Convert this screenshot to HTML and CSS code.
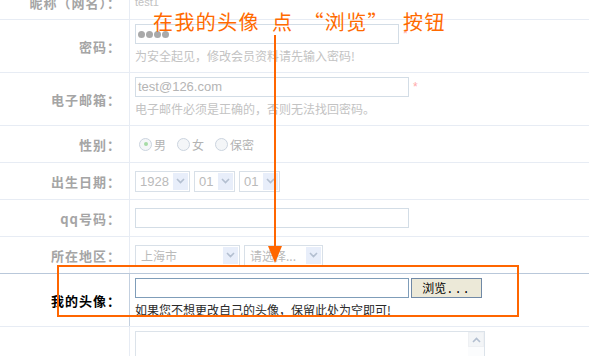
FILE: index.html
```html
<!DOCTYPE html>
<html lang="zh-CN">
<head>
  <meta charset="UTF-8" />
  <title>修改会员资料</title>
  <link rel="stylesheet" href="styles.css">
</head>
<body>
  <div class="page">
    <div class="form">
      <div class="row row-top">
        <div class="label">昵称（网名）：</div>
        <div class="field"><span class="plain">test1</span></div>
      </div>

      <div class="row row-tall">
        <div class="label">密码：</div>
        <div class="field">
          <div class="line">
            <div class="box box-pwd"><span class="dot"></span><span class="dot"></span><span class="dot"></span><span class="dot"></span></div>
            <span class="star">*</span>
          </div>
          <div class="hint">为安全起见，修改会员资料请先输入密码!</div>
        </div>
      </div>

      <div class="row row-tall">
        <div class="label">电子邮箱：</div>
        <div class="field">
          <div class="line">
            <div class="box box-wide">test@126.com</div>
            <span class="star">*</span>
          </div>
          <div class="hint">电子邮件必须是正确的，否则无法找回密码。</div>
        </div>
      </div>

      <div class="row">
        <div class="label">性别：</div>
        <div class="field">
          <label class="opt"><span class="radio on"></span>男</label>
          <label class="opt"><span class="radio"></span>女</label>
          <label class="opt"><span class="radio"></span>保密</label>
        </div>
      </div>

      <div class="row">
        <div class="label">出生日期：</div>
        <div class="field">
          <div class="sel sel-year">1928<span class="arr"><svg width="9" height="6" viewBox="0 0 9 6"><polyline points="1,1 4.5,4.5 8,1" /></svg></span></div>
          <div class="sel sel-day">01<span class="arr"><svg width="9" height="6" viewBox="0 0 9 6"><polyline points="1,1 4.5,4.5 8,1" /></svg></span></div>
          <div class="sel sel-day">01<span class="arr"><svg width="9" height="6" viewBox="0 0 9 6"><polyline points="1,1 4.5,4.5 8,1" /></svg></span></div>
        </div>
      </div>

      <div class="row">
        <div class="label">qq号码：</div>
        <div class="field">
          <div class="box box-wide"></div>
        </div>
      </div>

      <div class="row row-before-focus">
        <div class="label">所在地区：</div>
        <div class="field">
          <div class="sel sel-city cjk">上海市<span class="arr"><svg width="9" height="6" viewBox="0 0 9 6"><polyline points="1,1 4.5,4.5 8,1" /></svg></span></div>
          <div class="sel sel-area cjk">请选择...<span class="arr"><svg width="9" height="6" viewBox="0 0 9 6"><polyline points="1,1 4.5,4.5 8,1" /></svg></span></div>
        </div>
      </div>

      <div class="row row-tall row-focus">
        <div class="label">我的头像：</div>
        <div class="field">
          <div class="line">
            <div class="box file-box"></div>
            <button class="browse">浏览<span class="dots">...</span></button>
          </div>
          <div class="hint">如果您不想更改自己的头像，保留此处为空即可!</div>
        </div>
      </div>

      <div class="row row-last">
        <div class="label"></div>
        <div class="field">
          <div class="area">
            <div class="scroll"><span class="up"><svg width="9" height="6" viewBox="0 0 9 6"><polyline points="1,5 4.5,1.5 8,5" /></svg></span></div>
          </div>
        </div>
      </div>
    </div>

    <!-- 标注 -->
    <div class="note">
      <span class="seg">在我的头像</span><span class="seg seg-dian">点</span><span class="seg seg-q">“浏览”</span><span class="seg seg-btn">按钮</span>
    </div>
    <svg class="arrow" width="20" height="240" viewBox="0 0 20 240">
      <line x1="10" y1="0" x2="10" y2="214" />
      <polygon points="3,211 17,211 10,228" />
    </svg>
    <div class="mark"></div>
  </div>
</body>
</html>
```

FILE: styles.css
```css
body {
  margin: 0;
  background: #fff;
  font-family: "Liberation Sans", "Noto Sans CJK SC", sans-serif;
  font-size: 12px;
  color: #333;
}

.page {
  position: relative;
  width: 589px;
  height: 356px;
  overflow: hidden;
}

.form {
  margin-top: -15px;
}

.row {
  display: grid;
  grid-template-columns: 130px 1fr;
  height: 37px;
  box-sizing: border-box;
  border-bottom: 1px solid #e7ecf4;
}

.row-top {
  height: 35px;
}

.row-tall {
  height: 53px;
}

.row-before-focus {
  border-bottom-color: #b9c8da;
}

.row-last {
  height: auto;
  border-bottom: none;
}

.label {
  box-sizing: border-box;
  border-right: 1px solid #e7ecf4;
  display: flex;
  align-items: center;
  justify-content: flex-end;
  padding-right: 8px;
  font-family: "Noto Sans CJK SC", sans-serif;
  font-size: 13px;
  letter-spacing: 1px;
  font-weight: bold;
  color: #a5a5a5;
}

.row-focus .label {
  color: #000;
  border-right-color: #c3d0e0;
}

.field {
  padding-left: 5px;
  display: flex;
  align-items: center;
}

.row-tall .field {
  flex-direction: column;
  align-items: flex-start;
  padding-top: 4px;
}

.row-last .field {
  align-items: flex-start;
  padding-top: 4px;
}

.plain {
  color: #c2c2c2;
  font-size: 11px;
}

.line {
  display: flex;
  align-items: flex-start;
}

.box {
  box-sizing: border-box;
  height: 20px;
  border: 1px solid #d3dde6;
  padding-left: 2px;
  font-size: 13px;
  line-height: 18px;
  color: #b5b5b5;
  display: flex;
  align-items: center;
}

.box-pwd {
  width: 264px;
  gap: 1px;
  padding-top: 1px;
}

.dot {
  width: 7px;
  height: 7px;
  border-radius: 50%;
  background: #a9a9a9;
}

.box-wide {
  width: 274px;
}

.star {
  color: #ffaaaa;
  font-size: 12px;
  margin-left: 4px;
  line-height: 20px;
}

.hint {
  margin-top: 4px;
  font-family: "Noto Sans CJK SC", sans-serif;
  line-height: 16px;
  color: #c3c3c3;
}

.row-focus .hint {
  color: #2a2a2a;
}

.opt {
  display: flex;
  align-items: center;
  margin-left: 4px;
  margin-right: 7px;
  font-family: "Noto Sans CJK SC", sans-serif;
  color: #b3b3b3;
}

.radio {
  box-sizing: border-box;
  width: 13px;
  height: 13px;
  margin-right: 2px;
  border: 1px solid #cbd4df;
  border-radius: 50%;
  background: #f4f6f8;
  display: flex;
  align-items: center;
  justify-content: center;
}

.radio.on::after {
  content: "";
  width: 4px;
  height: 4px;
  border-radius: 50%;
  background: #a6dba6;
}

.sel {
  position: relative;
  box-sizing: border-box;
  height: 21px;
  margin-right: 4px;
  padding-left: 4px;
  border: 1px solid #d8e0e8;
  font-size: 13px;
  line-height: 19px;
  color: #bababa;
}

.sel.cjk {
  font-family: "Noto Sans CJK SC", sans-serif;
  font-size: 12px;
  padding-left: 5px;
}

.sel-year {
  width: 55px;
}

.sel-day {
  width: 41px;
}

.sel-city {
  width: 105px;
}

.sel-area {
  width: 79px;
}

.arr {
  position: absolute;
  top: 1px;
  right: 1px;
  bottom: 1px;
  width: 15px;
  background: #e8eefa;
  display: flex;
  align-items: center;
  justify-content: center;
}

.arr svg,
.up svg {
  fill: none;
  stroke: #b3bfd0;
  stroke-width: 1.6;
}

.file-box {
  width: 274px;
  border-color: #7f9db9;
}

.browse {
  box-sizing: border-box;
  width: 71px;
  height: 20px;
  margin-left: 2px;
  padding: 0;
  border: 1px solid #7089a6;
  background: #ece9d8;
  font-family: "Noto Sans CJK SC", sans-serif;
  font-size: 12px;
  color: #000;
  line-height: 18px;
}

.dots {
  font-family: "Liberation Mono", monospace;
  letter-spacing: 1px;
}

.area {
  box-sizing: border-box;
  width: 350px;
  height: 40px;
  border: 1px solid #dce3ea;
  display: flex;
  justify-content: flex-end;
}

.scroll {
  width: 16px;
  background: #fbfcfd;
}

.up {
  box-sizing: border-box;
  display: flex;
  align-items: center;
  justify-content: center;
  height: 15px;
  border: 1px solid #eef0f3;
  background: #f3f5f7;
}

.note {
  position: absolute;
  left: 153px;
  top: 8px;
  font-family: "Noto Sans CJK SC", sans-serif;
  font-size: 20px;
  letter-spacing: 1.4px;
  line-height: 28px;
  color: #ff6a00;
  white-space: nowrap;
}

.seg {
  display: inline-block;
}

.seg-dian {
  margin-left: 12px;
}

.seg-q {
  margin-left: 10px;
}

.seg-btn {
  margin-left: 14px;
}

.arrow {
  position: absolute;
  left: 265px;
  top: 35px;
}

.arrow line {
  stroke: #ff6600;
  stroke-width: 2;
}

.arrow polygon {
  fill: #ff6600;
}

.mark {
  position: absolute;
  left: 57px;
  top: 265px;
  width: 462px;
  height: 52px;
  box-sizing: border-box;
  border: 2px solid #ff6600;
}
```
